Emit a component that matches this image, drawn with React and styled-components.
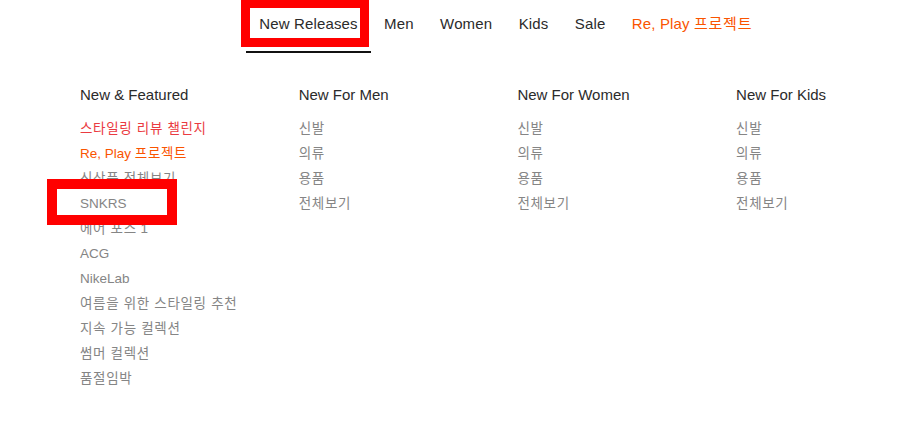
import styled, { createGlobalStyle } from "styled-components";

const GlobalStyle = createGlobalStyle`
  html, body {
    margin: 0;
    padding: 0;
    background: #fff;
  }
  body {
    font-family: "Liberation Sans", Arial, "Noto Sans CJK KR", sans-serif;
  }
`;

const navItems = [
  { label: "New Releases", active: true },
  { label: "Men" },
  { label: "Women" },
  { label: "Kids" },
  { label: "Sale" },
  { label: "Re, Play 프로젝트", tone: "orange" },
];

const subLinks = [{ label: "신발" }, { label: "의류" }, { label: "용품" }, { label: "전체보기" }];

const columns = [
  {
    title: "New & Featured",
    links: [
      { label: "스타일링 리뷰 챌린지", tone: "red" },
      { label: "Re, Play 프로젝트", tone: "orange" },
      { label: "신상품 전체보기" },
      { label: "SNKRS" },
      { label: "에어 포스 1" },
      { label: "ACG" },
      { label: "NikeLab" },
      { label: "여름을 위한 스타일링 추천" },
      { label: "지속 가능 컬렉션" },
      { label: "썸머 컬렉션" },
      { label: "품절임박" },
    ],
  },
  { title: "New For Men", links: subLinks },
  { title: "New For Women", links: subLinks },
  { title: "New For Kids", links: subLinks },
];

// hangul runs are spaced a little wider, like the korean face in the design
const Label = ({ text }) =>
  text.split(/([가-힣]+(?:\s+[가-힣]+)*)/).map((part, i) =>
    /[가-힣]/.test(part) ? <Ko key={i}>{part}</Ko> : part
  );

const App = () => {
  return (
    <>
      <GlobalStyle />
      <Page>
        <Nav>
          {navItems.map(item => (
            <NavItem key={item.label} $active={item.active} $tone={item.tone}>
              <Label text={item.label} />
            </NavItem>
          ))}
        </Nav>
        <Menu>
          {columns.map(col => (
            <Column key={col.title}>
              <Heading>{col.title}</Heading>
              <LinkList>
                {col.links.map(link => (
                  <LinkItem key={link.label} $tone={link.tone}>
                    <Label text={link.label} />
                  </LinkItem>
                ))}
              </LinkList>
            </Column>
          ))}
        </Menu>
        <Highlight $top={-1} $left={241} $width={128} $height={48} $border={9} />
        <Highlight $top={179} $left={47} $width={130} $height={46} $border={10} />
      </Page>
    </>
  );
};

export default App;

/* ---------------------------- STYLED COMPONENTS --------------------------- */

const tones = {
  red: "#ea3a41",
  orange: "#fa5400",
};

const Page = styled.div`
  position: relative;
  width: 913px;
  height: 421px;
  overflow: hidden;
`;

const Ko = styled.span`
  letter-spacing: 0.05em;
`;

const Nav = styled.nav`
  display: flex;
  padding-left: 246px;
`;

const NavItem = styled.div`
  box-sizing: border-box;
  height: 53px;
  padding: 14px 13.2px 0;
  font-size: 15px;
  line-height: 20px;
  letter-spacing: 0.15px;
  white-space: nowrap;
  color: ${p => tones[p.$tone] || "#2b2b2b"};
  border-bottom: 2px solid ${p => (p.$active ? "#111" : "transparent")};
`;

const Menu = styled.div`
  display: grid;
  grid-template-columns: repeat(4, 218.7px);
  padding: 32px 0 0 80px;
`;

const Column = styled.div`
  display: flex;
  flex-direction: column;
`;

const Heading = styled.div`
  font-size: 15px;
  line-height: 20px;
  height: 20px;
  color: #2b2b2b;
  white-space: nowrap;
`;

const LinkList = styled.ul`
  list-style: none;
  margin: 11px 0 0;
  padding: 0;
`;

const LinkItem = styled.li`
  height: 25px;
  font-size: 13.5px;
  line-height: 25px;
  white-space: nowrap;
  color: ${p => tones[p.$tone] || "#858585"};
`;

const Highlight = styled.div`
  position: absolute;
  top: ${p => p.$top}px;
  left: ${p => p.$left}px;
  width: ${p => p.$width}px;
  height: ${p => p.$height}px;
  box-sizing: border-box;
  border: ${p => p.$border}px solid #ff0000;
  pointer-events: none;
`;
